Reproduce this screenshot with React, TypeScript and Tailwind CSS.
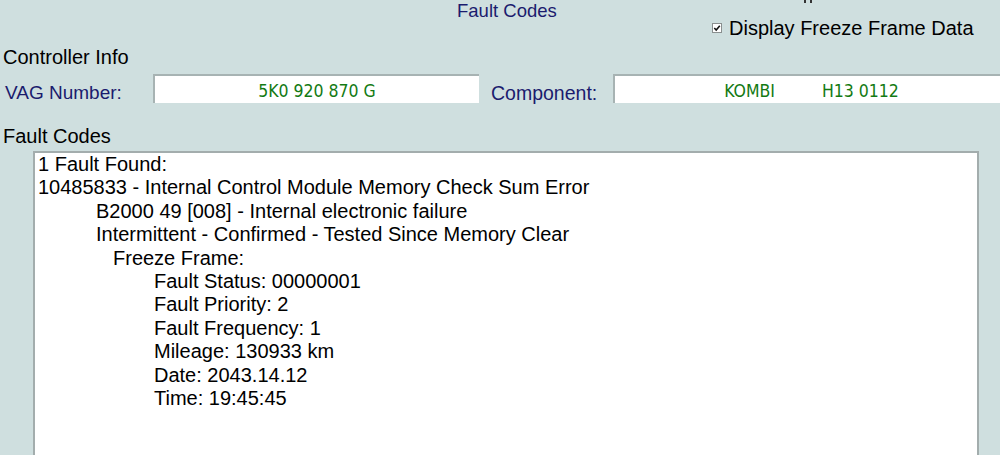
import React from 'react';

const navy = 'text-[#1b1b6e]';

const lines: { text: string; indent: string }[] = [
  { text: '1 Fault Found:', indent: 'pl-0' },
  { text: '10485833 - Internal Control Module Memory Check Sum Error', indent: 'pl-0' },
  { text: 'B2000 49 [008] - Internal electronic failure', indent: 'pl-[58px]' },
  { text: 'Intermittent - Confirmed - Tested Since Memory Clear', indent: 'pl-[58px]' },
  { text: 'Freeze Frame:', indent: 'pl-[75px]' },
  { text: 'Fault Status: 00000001', indent: 'pl-[116px]' },
  { text: 'Fault Priority: 2', indent: 'pl-[116px]' },
  { text: 'Fault Frequency: 1', indent: 'pl-[116px]' },
  { text: 'Mileage: 130933 km', indent: 'pl-[116px]' },
  { text: 'Date: 2043.14.12', indent: 'pl-[116px]' },
  { text: 'Time: 19:45:45', indent: 'pl-[116px]' },
];

const CheckBox: React.FC = () => (
  <svg width="10" height="10" viewBox="0 0 10 10" className="shrink-0">
    <rect x="0.5" y="0.5" width="9" height="9" fill="#ffffff" stroke="#8a8f8f" />
    <path d="M2.3 5 L4.2 7 L7.8 2.8" fill="none" stroke="#111" strokeWidth="1.6" />
  </svg>
);

const ValueBox: React.FC<{ className?: string; children: React.ReactNode }> = ({ className, children }) => (
  <div
    className={`h-[29px] shrink-0 bg-white border-t-2 border-l-2 border-[#a7b3b3] flex justify-center pt-[5px] text-[17.5px] leading-[20px] text-[#137a13] whitespace-pre [font-family:'DejaVu_Sans_Condensed','DejaVu_Sans',sans-serif] [font-stretch:condensed] ${className ?? ''}`}
  >
    {children}
  </div>
);

export default function App() {
  return (
    <div className="h-[455px] w-[1000px] overflow-hidden bg-[#cfdfdf] text-black [font-family:'Liberation_Sans',Arial,sans-serif]">
      {/* header */}
      <div className="flex h-[46px]">
        <div className={`w-[712px] shrink-0 pl-[457px] pt-[1px] text-[18.5px] leading-[20px] ${navy}`}>Fault Codes</div>
        <div className="relative flex items-start pt-[16px]">
          <div className="absolute left-[92px] top-0 flex gap-[4px]">
            <span className="block w-[2px] h-[3px] bg-[#333]" />
            <span className="block w-[2px] h-[3px] bg-[#333]" />
          </div>
          <div className="flex items-center gap-[7px] h-[24px]">
            <CheckBox />
            <span className="text-[20px] leading-[24px] whitespace-nowrap">Display Freeze Frame Data</span>
          </div>
        </div>
      </div>

      {/* controller info */}
      <div className="pl-[3px] text-[20px] leading-[22px]">Controller Info</div>
      <div className="flex mt-[6px] h-[29px] pl-[5px]">
        <div className={`w-[148px] shrink-0 pt-[8px] text-[19px] leading-[22px] ${navy}`}>VAG Number:</div>
        <ValueBox className="w-[326px]">5K0 920 870 G</ValueBox>
        <div className={`w-[134px] shrink-0 pl-[12px] pt-[8px] text-[19.5px] leading-[22px] ${navy}`}>Component:</div>
        <ValueBox className="w-[395px]">
          <span>KOMBI</span>
          <span className="ml-[47px]">H13 0112</span>
        </ValueBox>
      </div>

      {/* fault codes */}
      <div className="mt-[22px] pl-[3px] text-[20px] leading-[22px]">Fault Codes</div>
      <div className="mt-[4px] ml-[33px] w-[946px] h-[320px] bg-white border-2 border-b-0 border-[#a3adad] pl-[3px] text-[20px] leading-[23.4px]">
        {lines.map((l) => (
          <div key={l.text} className={`${l.indent} whitespace-nowrap`}>
            {l.text}
          </div>
        ))}
      </div>
    </div>
  );
}
